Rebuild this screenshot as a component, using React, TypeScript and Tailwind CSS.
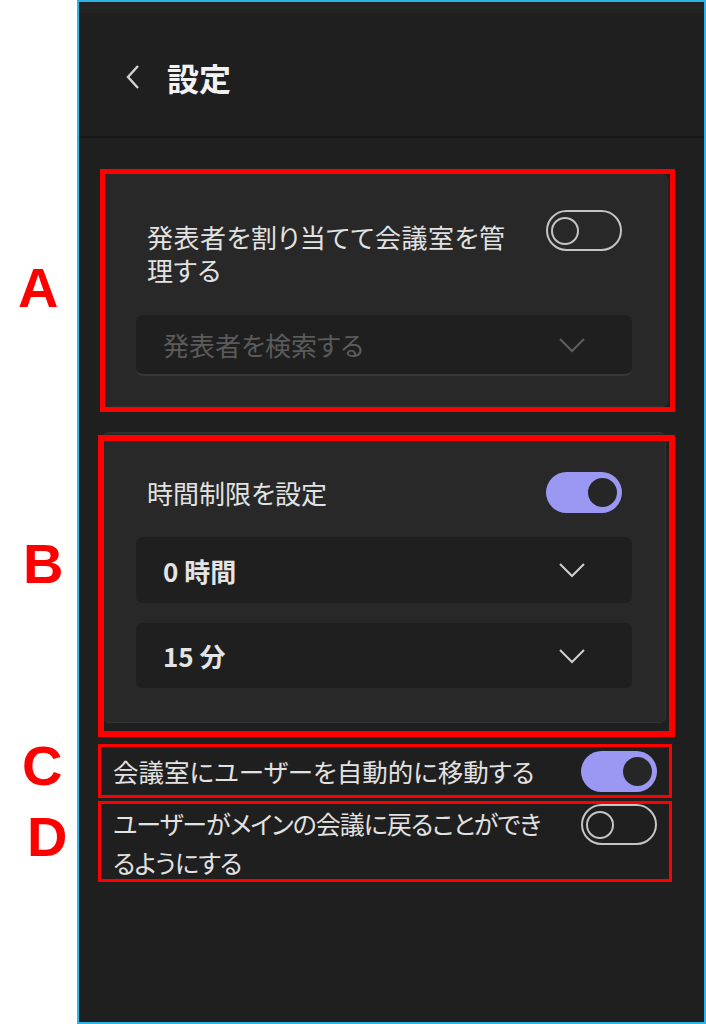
import { ReactNode } from "react";

const jp = "font-['Noto_Sans_CJK_JP','Noto_Sans',sans-serif] [font-feature-settings:'palt']";

function Toggle({ on }: { on?: boolean }) {
  if (on) {
    return (
      <div className="flex h-[41px] w-[76px] shrink-0 items-center justify-end rounded-full bg-[#9a98f3] pr-[5px]">
        <div className="h-[29px] w-[29px] rounded-full bg-[#262626]" />
      </div>
    );
  }
  return (
    <div className="flex h-[41px] w-[76px] shrink-0 items-center rounded-full border-[2.5px] border-[#c4c4c4] pl-[3px]">
      <div className="h-[28px] w-[28px] rounded-full border-[2.5px] border-[#c4c4c4]" />
    </div>
  );
}

function Chevron({ color }: { color: string }) {
  return (
    <svg width="28" height="16" viewBox="0 0 28 16" className="shrink-0">
      <polyline points="2,2 14,14 26,2" fill="none" stroke={color} strokeWidth="2" />
    </svg>
  );
}

function Select({ label, disabled, h }: { label: string; disabled?: boolean; h: string }) {
  return (
    <div
      className={`flex ${h} items-center justify-between rounded-[7px] bg-[#1f1f1f] pl-[27px] pr-[46px] ${
        disabled ? "border-b-[2px] border-[#383838]" : ""
      }`}
    >
      <span
        className={`${jp} text-[26px] ${
          disabled ? "text-[#5b5b5b]" : "font-semibold text-[#e4e4e4]"
        }`}
      >
        {label}
      </span>
      <Chevron color={disabled ? "#5e5e5e" : "#cfcfcf"} />
    </div>
  );
}

// red annotation frame drawn over a section
function Frame({ wrap, className, children }: { wrap: string; className: string; children: ReactNode }) {
  return (
    <div className={`relative ${wrap}`}>
      {children}
      <div className={`pointer-events-none absolute border-[#ff0000] ${className}`} />
    </div>
  );
}

function Letter({ ch, className }: { ch: string; className: string }) {
  return (
    <div
      className={`h-[56px] font-['Liberation_Sans',Arial,sans-serif] text-[56px] leading-none font-bold text-[#ff0000] ${className}`}
    >
      {ch}
    </div>
  );
}

export default function App() {
  return (
    <div className="flex h-[1024px] w-[706px] bg-white">
      <div className="flex w-[77px] shrink-0 flex-col">
        <Letter ch="A" className="mt-[260px] pl-[18px]" />
        <Letter ch="B" className="mt-[220px] pl-[23px]" />
        <Letter ch="C" className="mt-[146px] pl-[22px]" />
        <Letter ch="D" className="mt-[15px] pl-[27px]" />
      </div>

      <div className="flex h-[1024px] w-[629px] flex-col border-2 border-[#2eb4ea] bg-[#1f1f1f]">
        {/* header */}
        <div className="h-[11px] bg-[#242424]" />
        <div className="flex h-[123px] items-center gap-[26px] pt-[4px] pl-[46px]">
          <svg width="16" height="26" viewBox="0 0 16 26">
            <polyline points="13,2 3,13 13,24" fill="none" stroke="#d2d2d2" strokeWidth="2.4" />
          </svg>
          <span className={`${jp} text-[32px] font-bold text-[#f2f2f2]`}>設定</span>
        </div>
        <div className="h-[2px] bg-[#161616]" />

        <div className="flex flex-col pt-[36px]">
          {/* A */}
          <Frame wrap="ml-[25px] mr-[36px]" className="-top-[5px] -right-[7px] -bottom-[5px] -left-[4px] border-[5px]">
            <div className="rounded-[6px] border border-[#2e2e2e] bg-[#282828] pl-[31px] pr-[35px] pt-[35px] pb-[30px]">
              <div className="flex items-start justify-between pr-[10px]">
                <div className={`${jp} mt-[10px] w-[378px] pl-[11px] text-[26px] leading-[33px] tracking-[0.5px] text-[#e2e2e2]`}>
                  発表者を割り当てて会議室を管理する
                </div>
                <Toggle />
              </div>
              <div className="mt-[29px]">
                <Select label="発表者を検索する" disabled h="h-[61px]" />
              </div>
            </div>
          </Frame>

          {/* B */}
          <Frame wrap="mt-[25px] ml-[24px] mr-[38px]" className="top-[3px] -right-[9px] -bottom-[14px] -left-[5px] border-[6px]">
            <div className="rounded-[6px] border border-[#333333] bg-[#282828] pl-[32px] pr-[33px] pt-[39px] pb-[34px]">
              <div className="flex items-center justify-between pr-[10px]">
                <span className={`${jp} pl-[11px] text-[26px] text-[#e2e2e2]`}>時間制限を設定</span>
                <Toggle on />
              </div>
              <div className="mt-[24px] flex flex-col gap-[20px]">
                <Select label="0 時間" h="h-[66px]" />
                <Select label="15 分" h="h-[65px]" />
              </div>
            </div>
          </Frame>

          {/* C */}
          <div className="mt-[21px] ml-[19px] mr-[32px] flex h-[54px] items-center justify-between border-[3px] border-[#ff0000] pl-[12px] pr-[12px]">
            <span className={`${jp} text-[25.5px] text-[#e2e2e2]`}>会議室にユーザーを自動的に移動する</span>
            <Toggle on />
          </div>

          {/* D */}
          <div className="mt-[3px] ml-[19px] mr-[32px] flex h-[81px] items-start justify-between border-[3px] border-[#ff0000] pl-[12px] pr-[12px]">
            <span className={`${jp} w-[440px] text-[25px] leading-[39px] tracking-[-1px] text-[#e2e2e2]`}>
              ユーザーがメインの会議に戻ることができるようにする
            </span>
            <Toggle />
          </div>
        </div>
      </div>
    </div>
  );
}
